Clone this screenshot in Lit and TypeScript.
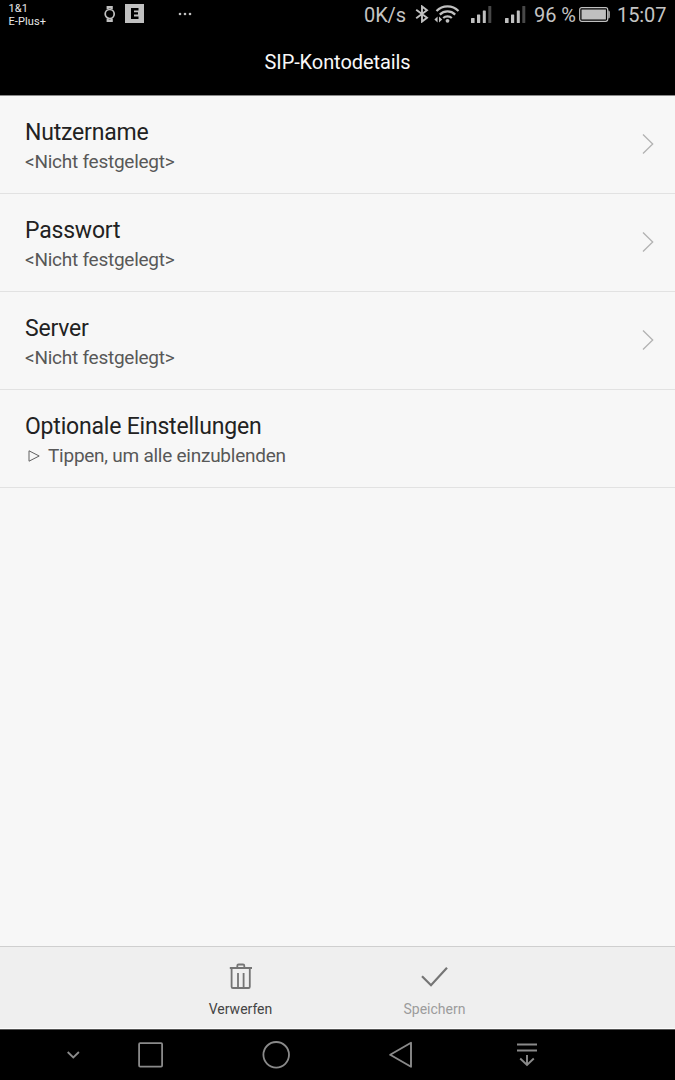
import { LitElement, html, css, svg, nothing } from "lit";
import { customElement, property } from "lit/decorators.js";

@customElement("setting-row")
class SettingRow extends LitElement {
  @property() label = "";
  @property() summary = "";
  @property({ type: Boolean }) expander = false;

  static styles = css`
    :host { display: flex; box-sizing: border-box; height: 98px; padding: 0 20px 0 25px; border-bottom: 1px solid #e2e2e2; align-items: center; justify-content: space-between; }
    .text { display: flex; flex-direction: column; padding-top: 4px; }
    .label { font-size: 23px; line-height: 30px; color: #222; letter-spacing: -0.2px; white-space: nowrap; }
    .summary { display: flex; align-items: center; font-size: 19px; line-height: 28px; letter-spacing: -0.25px; color: #585858; white-space: nowrap; }
    .tri { margin: 1px 8px 0 3px; }
    .chevron { margin-bottom: 2px; }
    svg { display: block; }
  `;

  render() {
    return html`
      <div class="text">
        <div class="label">${this.label}</div>
        <div class="summary">
          ${this.expander
            ? html`<svg class="tri" width="12" height="12" viewBox="0 0 12 12"><path d="M1 .8 11.2 6 1 11.2Z" fill="none" stroke="#606060" stroke-width="1" /></svg>`
            : nothing}
          <span>${this.summary}</span>
        </div>
      </div>
      ${this.expander
        ? nothing
        : html`<svg class="chevron" width="14" height="22" viewBox="0 0 14 22"><path d="M2 1.5 11.7 11 2 20.5" fill="none" stroke="#b2b2b2" stroke-width="1.3" /></svg>`}
    `;
  }
}

const signal = svg`
  <rect x="0" y="13" width="3.6" height="5" rx=".6" />
  <rect x="6" y="9.5" width="3.2" height="8.5" rx=".6" />
  <rect x="11.8" y="5.5" width="3" height="12.5" rx=".6" />
  <rect x="17.3" y="1" width="3" height="17" rx=".6" fill="#484848" />`;

@customElement("app-root")
class AppRoot extends LitElement {
  static styles = css`
    :host { display: flex; flex-direction: column; width: 675px; height: 1080px; background: #f7f7f7; font-family: Roboto, "Noto Sans", sans-serif; overflow: hidden; }
    svg { display: block; flex: none; }
    .status { display: flex; height: 30px; flex: none; background: #000; color: #c4c4c4; align-items: flex-start; box-sizing: border-box; padding-left: 8.5px; white-space: nowrap; }
    .carrier { width: 95.5px; padding-top: 2px; font-size: 11px; line-height: 13px; color: #e8e8e8; letter-spacing: 0.1px; }
    .watch { margin-top: 5px; }
    .e { margin: 4px 0 0 9px; }
    .dots { margin: 12px 0 0 34px; }
    .big { font-size: 20px; line-height: 30px; flex: none; }
    .rate { width: 51px; margin-left: 172px; letter-spacing: -0.1px; }
    .bt { margin-top: 5px; }
    .wifi { margin: 4px 0 0 5px; }
    .sig { margin: 5px 0 0 11px; }
    .sig2 { margin: 5px 0 0 13px; }
    .pct { width: 45px; margin-left: 8px; letter-spacing: -0.1px; }
    .bat { margin-top: 7px; }
    .clock { margin-left: 6px; letter-spacing: -0.1px; }
    .title { display: flex; height: 66px; box-sizing: border-box; flex: none; background: #000; color: #f8f8f8; align-items: center; justify-content: center; font-size: 20px; letter-spacing: -0.08px; padding-bottom: 1px; border-bottom: 1px solid #8a8a8a; }
    .list { flex: 1; }
    .actions { display: flex; box-sizing: border-box; height: 83px; flex: none; justify-content: center; gap: 94px; background: #efefef; border-top: 1px solid #cfcfcf; border-bottom: 1px solid #fcfcfc; }
    .action { display: flex; flex-direction: column; align-items: center; width: 100px; padding-top: 15px; font-size: 14px; line-height: 20px; color: #444; }
    .action span { margin-top: 7px; }
    .off { color: #9c9c9c; }
    .nav { display: flex; box-sizing: border-box; height: 51px; flex: none; align-items: center; background: #000; border-top: 1px solid #555; padding-left: 66px; }
    .square { margin-left: 57px; }
    .circle { margin-left: 98px; }
    .back { margin-left: 99px; }
    .pull { margin-left: 102px; }
  `;

  render() {
    return html`
      <div class="status">
        <div class="carrier"><div>1&amp;1</div><div>E-Plus+</div></div>
        <svg class="watch" width="12" height="18" viewBox="0 0 12 18" fill="none" stroke="#c0c0c0">
          <circle cx="5.7" cy="9" r="4.5" stroke-width="1.7" />
          <path d="M2.6 1h6.2v3.6l-3.1-1-3.1 1zM2.6 17h6.2v-3.6l-3.1 1-3.1-1z" fill="#c0c0c0" stroke="none" />
        </svg>
        <svg class="e" width="19" height="19" viewBox="0 0 19 19">
          <path d="M0 0h19v19H0z" fill="#c0c0c0" />
          <path d="M6 4h7.5v2.4H9v1.8h4v2.4H9v2h4.5V15H6z" fill="#000" />
        </svg>
        <svg class="dots" width="14" height="4" viewBox="0 0 14 4" fill="#c0c0c0">
          <circle cx="2" cy="2" r="1.3" /><circle cx="7" cy="2" r="1.3" /><circle cx="12" cy="2" r="1.3" />
        </svg>
        <div class="big rate">0K/s</div>
        <svg class="bt" width="14" height="18" viewBox="0 0 14 18" fill="none" stroke="#c0c0c0" stroke-width="1.9">
          <path d="M1.2 4.7 12 12.8 7 16.6V1.4l5 3.8L1.2 13.3" />
        </svg>
        <svg class="wifi" width="26" height="19" viewBox="0 0 26 19" fill="none" stroke="#c0c0c0" stroke-width="2.2">
          <path d="M2.5 7a15.5 15.5 0 0 1 22 0M5.8 10.6a11 11 0 0 1 15.4 0M9.2 14a6.3 6.3 0 0 1 8.6 0" />
          <circle cx="13.5" cy="16.8" r="1.9" fill="#c0c0c0" stroke="none" />
          <path d="M3.6 12.5v6L.4 15.5zM5 12.5v6l3.2-3z" fill="#c0c0c0" stroke="none" />
        </svg>
        <svg class="sig" width="21" height="18" viewBox="0 0 21 18" fill="#c0c0c0">${signal}</svg>
        <svg class="sig2" width="21" height="18" viewBox="0 0 21 18" fill="#c0c0c0">${signal}</svg>
        <div class="big pct">96 %</div>
        <svg class="bat" width="32" height="15" viewBox="0 0 32 15">
          <rect x=".7" y=".7" width="28" height="13.6" rx="2" fill="none" stroke="#c0c0c0" stroke-width="1.2" />
          <rect x="2.5" y="2.5" width="24.4" height="10" fill="#c0c0c0" />
          <path d="M29.3 3.5c1.5 0 1.5 1 1.5 4s0 4-1.5 4z" fill="#c0c0c0" />
        </svg>
        <div class="big clock">15:07</div>
      </div>
      <div class="title">SIP-Kontodetails</div>
      <div class="list">
        <setting-row label="Nutzername" summary="<Nicht festgelegt>"></setting-row>
        <setting-row label="Passwort" summary="<Nicht festgelegt>"></setting-row>
        <setting-row label="Server" summary="<Nicht festgelegt>"></setting-row>
        <setting-row label="Optionale Einstellungen" summary="Tippen, um alle einzublenden" expander></setting-row>
      </div>
      <div class="actions">
        <div class="action">
          <svg width="24" height="30" viewBox="0 0 24 30" fill="none" stroke="#757575" stroke-width="1.8">
            <path d="M.8 6h22.2M8.3 6V3.8q0-1.3 1.3-1.3h4.4q1.3 0 1.3 1.3V6M2.6 6v18.7q0 1.3 1.3 1.3h15.6q1.3 0 1.3-1.3V6M9 11v15M14.6 11v15" />
          </svg>
          <span>Verwerfen</span>
        </div>
        <div class="action off">
          <svg width="28" height="30" viewBox="0 0 28 30" fill="none" stroke="#757575" stroke-width="2.2">
            <path d="M1 14.3 10 23.2 26 5.8" />
          </svg>
          <span>Speichern</span>
        </div>
      </div>
      <div class="nav">
        <svg width="14" height="10" viewBox="0 0 14 10" fill="none" stroke="#8a8a8a" stroke-width="1.8"><path d="M1.7 2 7.3 7.5 12.9 2" /></svg>
        <svg class="square" width="26" height="26" viewBox="0 0 26 26" fill="none" stroke="#8a8a8a" stroke-width="1.8"><rect x="2.1" y="1.2" width="23" height="23.4" rx="1" /></svg>
        <svg class="circle" width="29" height="28" viewBox="0 0 29 28" fill="none" stroke="#8a8a8a" stroke-width="1.8"><circle cx="15.2" cy="13.8" r="12.8" /></svg>
        <svg class="back" width="26" height="28" viewBox="0 0 26 28" fill="none" stroke="#8a8a8a" stroke-width="1.9" stroke-linejoin="round"><path d="M1.2 13.8 22 1.8v24z" /></svg>
        <svg class="pull" width="22" height="26" viewBox="0 0 22 26" fill="none" stroke="#8a8a8a" stroke-width="1.9"><path d="M0 2.5h20M0 8.5h20M10 13v10M3.2 16.5l6.8 6.5 6.8-6.5" /></svg>
      </div>
    `;
  }
}
